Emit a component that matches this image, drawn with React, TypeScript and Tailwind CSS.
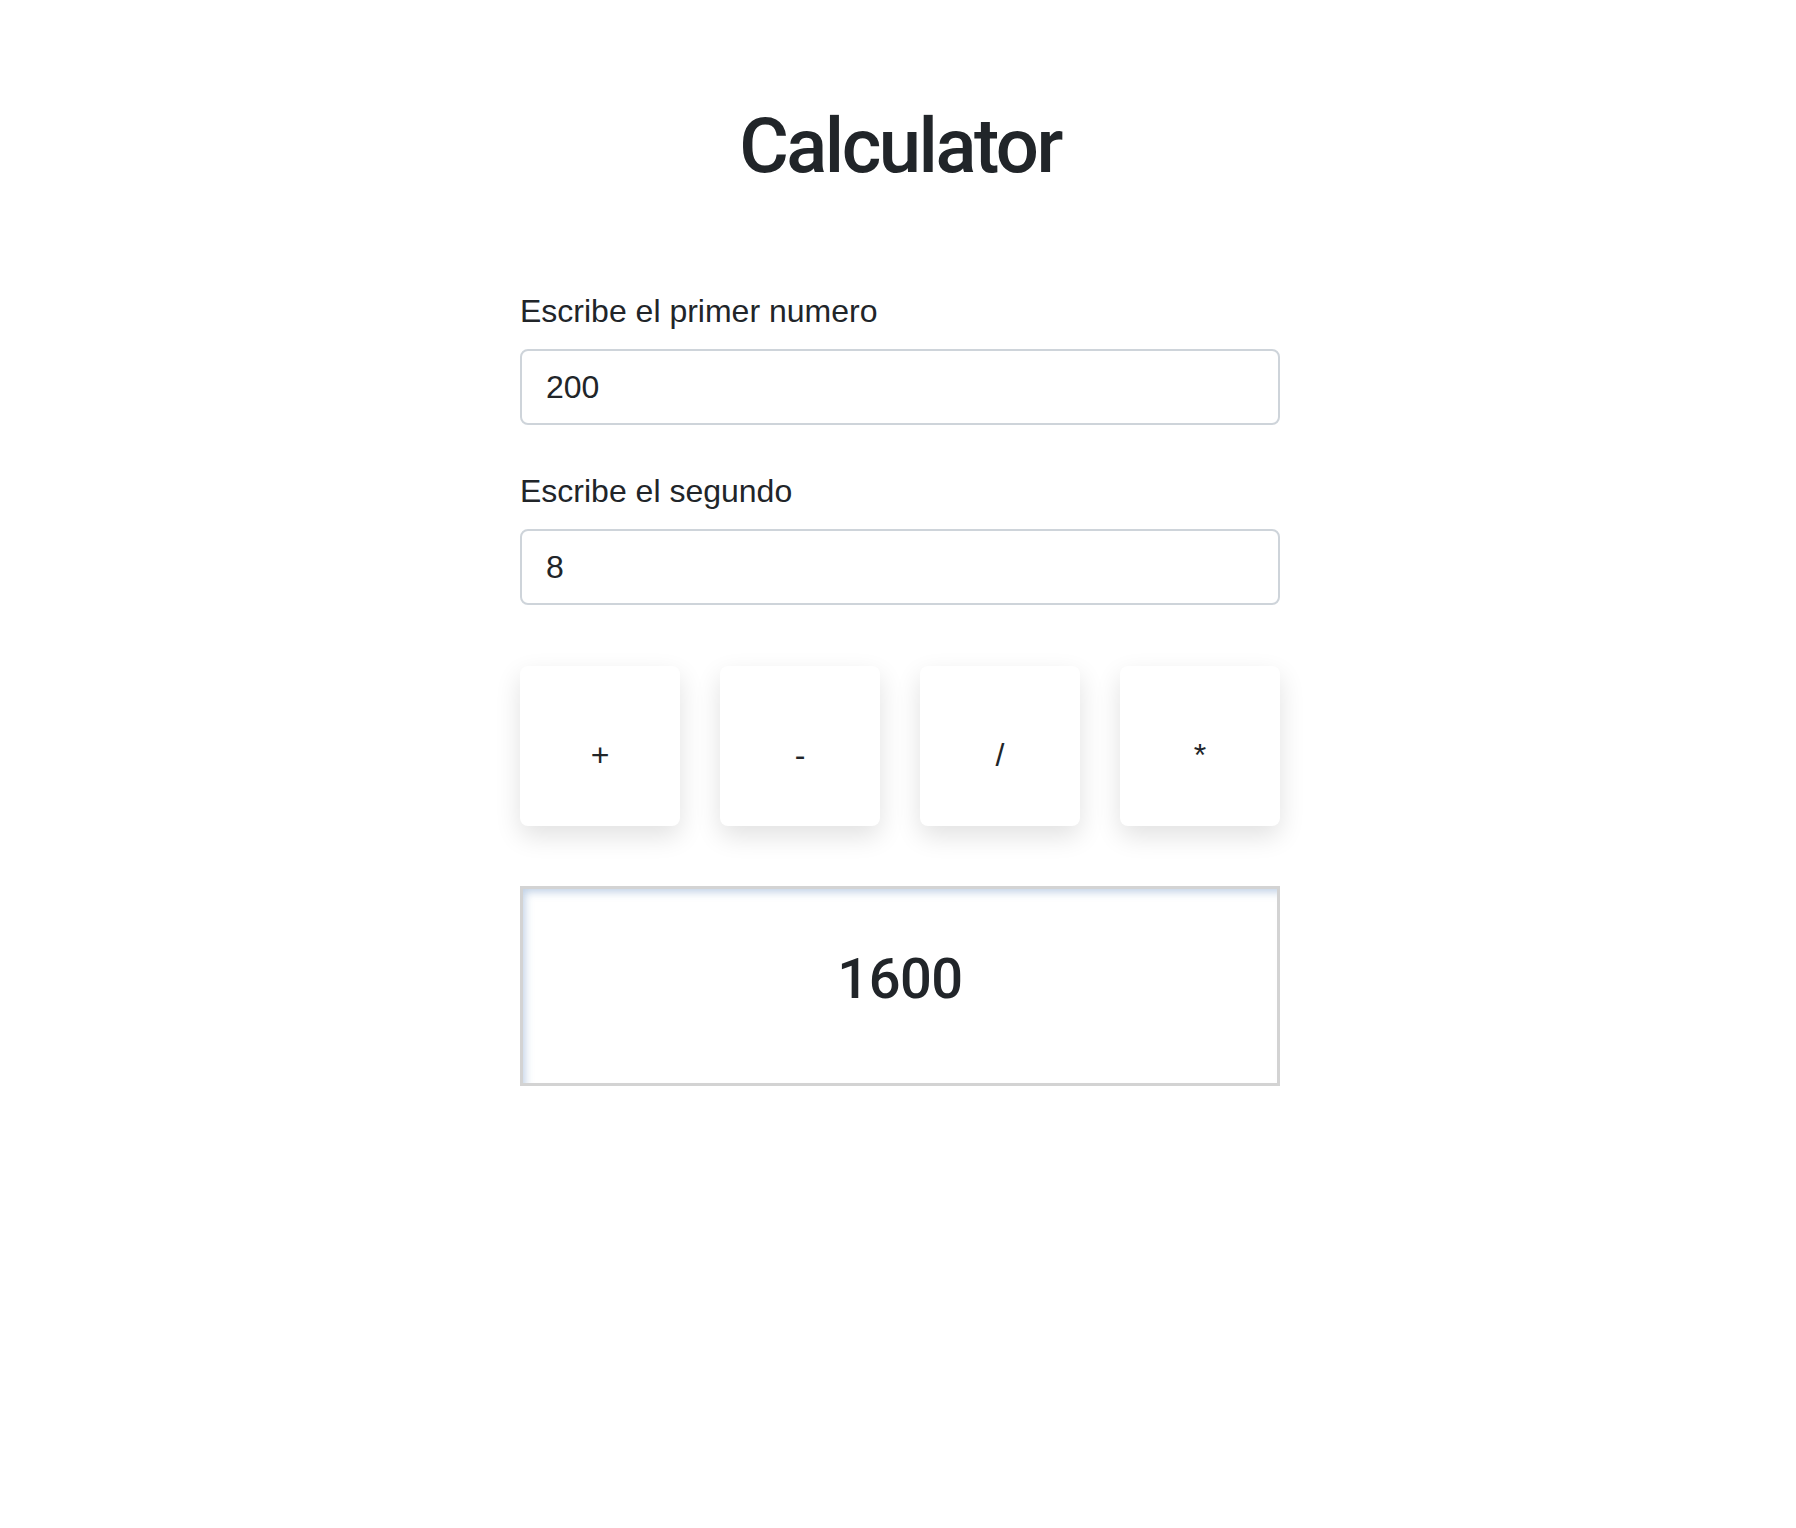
import { useState } from "react";

const OPS = ["+", "-", "/", "*"] as const;

export default function App() {
  const [a, setA] = useState("200");
  const [b, setB] = useState("8");
  const [result, setResult] = useState<number | string>(1600);

  const calc = (op: (typeof OPS)[number]) => {
    const x = parseFloat(a);
    const y = parseFloat(b);
    if (isNaN(x) || isNaN(y)) return setResult("");
    if (op === "+") setResult(x + y);
    if (op === "-") setResult(x - y);
    if (op === "/") setResult(x / y);
    if (op === "*") setResult(x * y);
  };

  return (
    <div className="min-h-[1528px] bg-white pl-[4px] font-['Liberation_Sans',Arial,sans-serif] text-[#212529]">
      <div className="mx-auto w-[760px] pt-[101px]">
        <h1 className="text-center font-['Roboto',sans-serif] text-[76px] font-medium leading-[1.2] tracking-[-2.5px]">
          Calculator
        </h1>

        <div className="mt-[95px]">
          <Field label="Escribe el primer numero" value={a} onChange={setA} />
          <div className="mt-[42px]">
            <Field label="Escribe el segundo" value={b} onChange={setB} />
          </div>
        </div>

        <div className="mt-[61px] grid grid-cols-4 gap-[40px]">
          {OPS.map((op) => (
            <button
              key={op}
              onClick={() => calc(op)}
              className="flex h-[160px] items-center justify-center rounded-lg bg-white pt-[17px] text-[32px] leading-[1.5] shadow-[0_10px_26px_rgba(0,0,0,0.12)]"
            >
              {op}
            </button>
          ))}
        </div>

        <div className="mt-[60px] h-[200px] border-[3px] border-[#d3d3d3] pt-[57px] text-center font-['Roboto',sans-serif] text-[56px] font-medium leading-[1.2] tracking-[-0.5px] shadow-[inset_5px_6px_9px_-3px_rgba(170,192,220,0.75)]">
          {result}
        </div>
      </div>
    </div>
  );
}

function Field({
  label,
  value,
  onChange,
}: {
  label: string;
  value: string;
  onChange: (v: string) => void;
}) {
  return (
    <label className="block">
      <span className="mb-[14px] block text-[32px] leading-[1.5]">{label}</span>
      <input
        value={value}
        onChange={(e) => onChange(e.target.value)}
        className="block h-[76px] w-full rounded-lg border-2 border-[#ced4da] bg-white px-[24px] text-[32px] text-[#212529] outline-none"
      />
    </label>
  );
}
